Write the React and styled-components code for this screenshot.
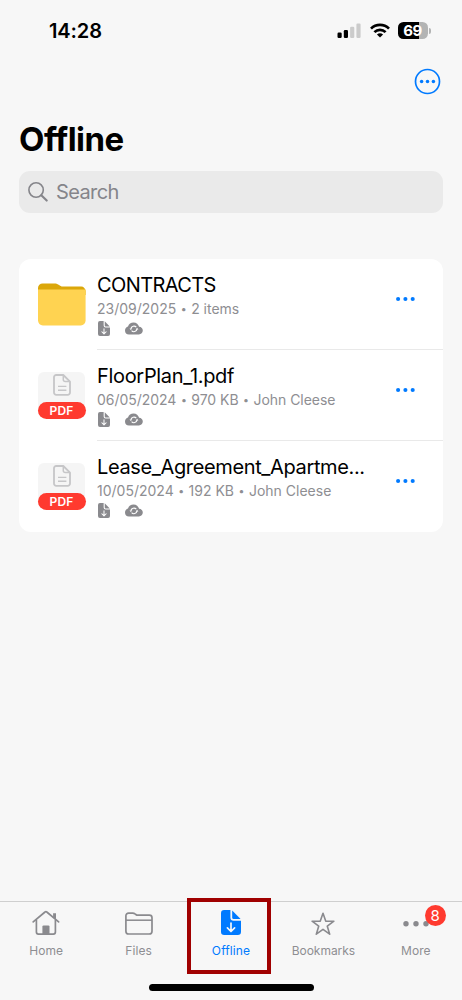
import React from "react";
import styled, { createGlobalStyle } from "styled-components";

//data
const files = [
  {
    name: "CONTRACTS",
    info: ["23/09/2025", "2 items"],
    type: "folder",
    spacing: -0.6,
    infoSpacing: 0,
  },
  {
    name: "FloorPlan_1.pdf",
    info: ["06/05/2024", "970 KB", "John Cleese"],
    type: "pdf",
    spacing: -0.32,
    infoSpacing: -0.03,
  },
  {
    name: "Lease_Agreement_Apartme...",
    info: ["10/05/2024", "192 KB", "John Cleese"],
    type: "pdf",
    spacing: -0.37,
    infoSpacing: 0,
  },
];

//icons
const SignalIcon = () => (
  <svg width="24" height="16" viewBox="0 0 24 16">
    <rect x="0.5" y="9.5" width="4.2" height="5.5" rx="1.2" fill="#000" />
    <rect x="6.8" y="7" width="4.2" height="8" rx="1.2" fill="#000" />
    <rect x="13.1" y="3.8" width="4.2" height="11.2" rx="1.2" fill="#cbcbcb" />
    <rect x="19.4" y="0.6" width="4.2" height="14.4" rx="1.2" fill="#cbcbcb" />
  </svg>
);

const WifiIcon = () => (
  <svg width="20" height="15" viewBox="0 0 20 15">
    <g fill="none" stroke="#000" strokeWidth="2.7">
      <path d="M1 5.6a12.9 12.9 0 0 1 18 0" />
      <path d="M4.4 9.1a8 8 0 0 1 11.2 0" />
    </g>
    <path d="M6.9 11.6a4.5 4.5 0 0 1 6.2 0L10 14.6z" fill="#000" />
  </svg>
);

const MoreCircleIcon = () => (
  <svg width="27" height="27" viewBox="0 0 27 27">
    <circle cx="13.5" cy="13.5" r="12" fill="none" stroke="#007aff" strokeWidth="1.7" />
    <g fill="#007aff">
      <circle cx="7.6" cy="13.5" r="1.75" />
      <circle cx="13.5" cy="13.5" r="1.75" />
      <circle cx="19.4" cy="13.5" r="1.75" />
    </g>
  </svg>
);

const SearchIcon = () => (
  <svg width="20" height="20" viewBox="0 0 20 20" fill="none" stroke="#85858a">
    <circle cx="8.1" cy="8" r="7.2" strokeWidth="1.6" />
    <path d="M13.3 13.2l5.4 5.4" strokeWidth="2.1" strokeLinecap="round" />
  </svg>
);

const FolderIcon = () => (
  <svg width="48" height="43" viewBox="0 0 48 43">
    <path
      d="M0 12V5a4.6 4.6 0 0 1 4.6-4.6h11.6c2 0 3 .4 4.4 1.4l1.6 1c1 .6 1.8.8 3 .8h18a4.4 4.4 0 0 1 4.4 4.4V12z"
      fill="#dba70a"
    />
    <path d="M0 6.4h47.6v31.2a4.8 4.8 0 0 1-4.8 4.8h-38a4.8 4.8 0 0 1-4.8-4.8z" fill="#ffd351" />
  </svg>
);

const PageIcon = () => (
  <svg width="18" height="22" viewBox="0 0 18 22" fill="none" stroke="#c6c6c8">
    <path
      d="M10.3 1H3.2A2.2 2.2 0 0 0 1 3.2v15.4a2.2 2.2 0 0 0 2.2 2.2h11.6a2.2 2.2 0 0 0 2.2-2.2V7.6z"
      strokeWidth="1.8"
      strokeLinejoin="round"
    />
    <path d="M10.3 1v4.8a1.8 1.8 0 0 0 1.8 1.8H17" strokeWidth="1.5" />
    <path d="M5 12.4h8.4M5 16.2h8.4" strokeWidth="1.4" />
  </svg>
);

const DownloadPageIcon = ({ width, height, color, bg }) => (
  <svg width={width} height={height} viewBox="0 0 20 25">
    <path
      d="M3.2 0H9.4v7.6a3.2 3.2 0 0 0 3.2 3.2H20v11a3.2 3.2 0 0 1-3.2 3.2H3.2A3.2 3.2 0 0 1 0 21.8V3.2A3.2 3.2 0 0 1 3.2 0z"
      fill={color}
    />
    <path d="M11.2.4l8.4 8.7h-7a1.4 1.4 0 0 1-1.4-1.4z" fill={color} />
    <path
      d="M10 13v8.2M6.4 17.9l3.6 3.6 3.6-3.6"
      fill="none"
      stroke={bg}
      strokeWidth="1.7"
      strokeLinecap="round"
      strokeLinejoin="round"
    />
  </svg>
);

const CloudSyncIcon = () => (
  <svg width="18" height="13" viewBox="0 0 18 13">
    <path
      d="M4.2 12.4A4.1 4.1 0 0 1 0 8.4c0-2 1.3-3.4 3-3.9C3.7 1.9 5.9.4 8.5.4c2.9 0 5 1.9 5.6 4.4 2.2.1 3.7 1.7 3.7 3.8 0 2.2-1.7 3.8-3.9 3.8z"
      fill="#8a8a8e"
    />
    <g fill="none" stroke="#fff" strokeWidth="1.1">
      <path d="M5.9 6.7a3.1 3.1 0 0 1 5.4-1.5" />
      <path d="M12 7.1a3.1 3.1 0 0 1-5.4 1.5" />
    </g>
    <path d="M4.5 6.4h2.7L5.8 8zM13.4 7.4h-2.7l1.4-1.6z" fill="#fff" />
  </svg>
);

const DotsIcon = () => (
  <svg width="20" height="6" viewBox="0 0 20 6" fill="#007aff">
    <circle cx="2.1" cy="3" r="2.05" />
    <circle cx="9.4" cy="3" r="2.05" />
    <circle cx="16.7" cy="3" r="2.05" />
  </svg>
);

const HomeIcon = () => (
  <svg width="28" height="25" viewBox="0 0 28 25" fill="none" stroke="#8a8a8e">
    <path
      d="M1.2 11.9L13 2a1.3 1.3 0 0 1 1.8 0l11.8 9.9"
      strokeWidth="1.7"
      strokeLinecap="round"
    />
    <path
      d="M4.4 9.8v12.3a2 2 0 0 0 2 2h15a2 2 0 0 0 2-2V9.8"
      strokeWidth="1.7"
    />
    <path d="M21.1 3.3h2.9v6.2l-2.9-2.4z" fill="#8a8a8e" stroke="none" />
    <path d="M10.4 24v-7.4a1.2 1.2 0 0 1 1.2-1.2h4.7a1.2 1.2 0 0 1 1.2 1.2V24z" fill="#8a8a8e" stroke="none" />
  </svg>
);

const FilesIcon = () => (
  <svg width="28" height="25" viewBox="0 0 28 25" fill="none" stroke="#8a8a8e" strokeWidth="1.7">
    <path d="M.9 21.2V5.8a2.7 2.7 0 0 1 2.7-2.7h4.1c1 0 1.6.2 2.3.8l.8.6c.6.5 1.2.7 2.2.7h11.4a2.6 2.6 0 0 1 2.6 2.6v13.4a2.8 2.8 0 0 1-2.8 2.8H3.7a2.8 2.8 0 0 1-2.8-2.8z" />
    <path d="M1 10.2h26" strokeWidth="1.5" />
  </svg>
);

const StarIcon = () => (
  <svg width="26" height="25" viewBox="0 0 26 25" fill="none" stroke="#8a8a8e">
    <path
      d="M13 3.2l2.7 7.9 8.2.1-6.6 5 2.4 8-6.7-4.9-6.7 4.9 2.4-8-6.6-5 8.2-.1z"
      strokeWidth="1.6"
      strokeLinejoin="round"
    />
  </svg>
);

const MoreIcon = () => (
  <svg width="28" height="25" viewBox="0 0 28 25" fill="#8a8a8e">
    <circle cx="4" cy="13.7" r="2.7" />
    <circle cx="14" cy="13.7" r="2.7" />
    <circle cx="24" cy="13.7" r="2.7" />
  </svg>
);

const tabs = [
  { label: "Home", icon: <HomeIcon />, spacing: 0.08 },
  { label: "Files", icon: <FilesIcon />, spacing: 0.12 },
  {
    label: "Offline",
    icon: <DownloadPageIcon width="20" height="25" color="#007aff" bg="#f7f7f7" />,
    active: true,
    spacing: 0.12,
  },
  { label: "Bookmarks", icon: <StarIcon />, spacing: -0.02 },
  { label: "More", icon: <MoreIcon />, badge: 8, spacing: 0.05 },
];

const App = () => {
  return (
    <>
      <GlobalStyle />
      <StyledScreen>
        <StyledStatusBar>
          <StyledTime>14:28</StyledTime>
          <StyledStatusIcons>
            <SignalIcon />
            <WifiIcon />
            <Battery level={69} />
          </StyledStatusIcons>
        </StyledStatusBar>
        <StyledToolbar>
          <StyledIconButton aria-label="Options">
            <MoreCircleIcon />
          </StyledIconButton>
        </StyledToolbar>
        <StyledTitle>Offline</StyledTitle>
        <StyledSearch>
          <SearchIcon />
          <span>Search</span>
        </StyledSearch>
        <StyledCard>
          {files.map((file) => (
            <FileRow file={file} key={file.name} />
          ))}
        </StyledCard>
        <StyledTabBar>
          {tabs.map((tab) => (
            <StyledTab key={tab.label} $active={tab.active} $spacing={tab.spacing}>
              {tab.icon}
              <span>{tab.label}</span>
              {tab.badge && <StyledBadge>{tab.badge}</StyledBadge>}
              {tab.active && <StyledHighlight />}
            </StyledTab>
          ))}
        </StyledTabBar>
        <StyledHomeIndicator />
      </StyledScreen>
    </>
  );
};

//Battery Component
const Battery = ({ level }) => {
  return (
    <StyledBattery>
      <StyledBatteryBody $level={level}>{level}</StyledBatteryBody>
      <StyledBatteryTip />
    </StyledBattery>
  );
};

//File row Component
const FileRow = ({ file }) => {
  return (
    <StyledRow>
      <StyledThumb>
        {file.type === "folder" ? (
          <FolderIcon />
        ) : (
          <StyledPdf>
            <PageIcon />
            <StyledPdfLabel>PDF</StyledPdfLabel>
          </StyledPdf>
        )}
      </StyledThumb>
      <StyledRowBody>
        <StyledDetails>
          <StyledName $spacing={file.spacing}>{file.name}</StyledName>
          <StyledInfo $spacing={file.infoSpacing}>
            {file.info.map((part, i) => (
              <React.Fragment key={part}>
                {i > 0 && <StyledBullet>•</StyledBullet>}
                {part}
              </React.Fragment>
            ))}
          </StyledInfo>
          <StyledFlags>
            <DownloadPageIcon width="12" height="15" color="#8a8a8e" bg="#fff" />
            <CloudSyncIcon />
          </StyledFlags>
        </StyledDetails>
        <StyledRowMenu aria-label="More actions">
          <DotsIcon />
        </StyledRowMenu>
      </StyledRowBody>
    </StyledRow>
  );
};

//styling
const GlobalStyle = createGlobalStyle`
  * {
    margin: 0;
    padding: 0;
    box-sizing: border-box;
  }
  body {
    background: #f7f7f7;
    font-family: "Inter", "Liberation Sans", sans-serif;
  }
  svg {
    display: block;
    flex-shrink: 0;
  }
  button {
    background: none;
    border: none;
  }
`;
const StyledScreen = styled.div`
  width: 462px;
  height: 1000px;
  display: flex;
  flex-direction: column;
  overflow: hidden;
  background: #f7f7f7;
`;
const StyledStatusBar = styled.div`
  height: 61px;
  padding: 0 31px 0 49px;
  display: flex;
  align-items: center;
  justify-content: space-between;
`;
const StyledTime = styled.div`
  font-size: 20px;
  font-weight: 600;
  letter-spacing: -0.1px;
`;
const StyledStatusIcons = styled.div`
  display: flex;
  align-items: center;
  gap: 8.5px;
`;
const StyledBattery = styled.div`
  display: flex;
  align-items: center;
  gap: 1px;
`;
const StyledBatteryBody = styled.div`
  width: 30px;
  height: 17px;
  padding-right: 1px;
  border-radius: 5.5px;
  background: linear-gradient(
    to right,
    #000 ${({ $level }) => $level}%,
    #b3b4b4 ${({ $level }) => $level}%
  );
  color: white;
  font-size: 15px;
  font-weight: 700;
  line-height: 17px;
  letter-spacing: -0.4px;
  text-align: center;
`;
const StyledBatteryTip = styled.div`
  width: 2px;
  height: 6px;
  border-radius: 0 2px 2px 0;
  background: #b3b4b4;
`;
const StyledToolbar = styled.div`
  height: 41px;
  padding-right: 21px;
  display: flex;
  align-items: center;
  justify-content: flex-end;
`;
const StyledIconButton = styled.button`
  display: flex;
`;
const StyledTitle = styled.h1`
  height: 69px;
  padding: 17px 0 0 19px;
  font-size: 33px;
  font-weight: 700;
  line-height: 40px;
  letter-spacing: -0.55px;
`;
const StyledSearch = styled.div`
  height: 42px;
  margin: 0 19px;
  padding: 0 9px;
  display: flex;
  align-items: center;
  gap: 8px;
  border-radius: 11px;
  background: #eaeaea;
  color: #85858a;
  font-size: 20px;
  letter-spacing: -0.6px;
`;
const StyledCard = styled.div`
  margin: 46px 19px 0;
  border-radius: 12px;
  background: white;
`;
const StyledRow = styled.div`
  height: 91px;
  padding-left: 19px;
  display: flex;
`;
const StyledThumb = styled.div`
  width: 59px;
  display: flex;
  align-items: center;
`;
const StyledPdf = styled.div`
  width: 47px;
  height: 47px;
  padding-top: 2px;
  display: flex;
  flex-direction: column;
  align-items: center;
  justify-content: space-between;
  border-radius: 6px 6px 9px 9px;
  background: #f5f5f5;
`;
const StyledPdfLabel = styled.div`
  width: 48px;
  height: 17px;
  border-radius: 9px;
  background: #ff3a2f;
  color: white;
  font-size: 12px;
  font-weight: 600;
  line-height: 17px;
  letter-spacing: 0.1px;
  text-align: center;
`;
const StyledRowBody = styled.div`
  flex: 1;
  display: flex;
  justify-content: space-between;
  ${StyledRow}:not(:last-child) & {
    border-bottom: 1px solid #e9e9e9;
  }
`;
const StyledDetails = styled.div`
  padding-top: 14px;
`;
const StyledName = styled.div`
  font-size: 20px;
  line-height: 25px;
  letter-spacing: ${({ $spacing }) => $spacing}px;
  white-space: nowrap;
`;
const StyledInfo = styled.div`
  margin-top: 1px;
  color: #8e8e92;
  font-size: 14px;
  line-height: 20px;
  letter-spacing: ${({ $spacing }) => $spacing}px;
  white-space: nowrap;
`;
const StyledBullet = styled.span`
  margin: 0 4.5px;
  font-size: 10.5px;
  line-height: 1;
  vertical-align: 1px;
`;
const StyledFlags = styled.div`
  height: 15px;
  margin-top: 2px;
  padding-left: 1px;
  display: flex;
  align-items: center;
  gap: 14.5px;
`;
const StyledRowMenu = styled.button`
  height: 79px;
  padding-right: 27px;
  display: flex;
  align-items: center;
`;
const StyledTabBar = styled.div`
  height: 83px;
  margin-top: auto;
  display: flex;
  border-top: 1px solid #cfcfcf;
`;
const StyledTab = styled.div`
  position: relative;
  flex: 1;
  padding-top: 8px;
  display: flex;
  flex-direction: column;
  align-items: center;
  gap: 8px;
  color: ${({ $active }) => ($active ? "#007aff" : "#8e8e92")};
  font-size: 12px;
  line-height: 16px;
  letter-spacing: ${({ $spacing }) => $spacing}px;
`;
const StyledBadge = styled.div`
  position: absolute;
  top: 3px;
  left: 55px;
  width: 21px;
  height: 21px;
  border-radius: 50%;
  background: #ff3a2f;
  color: white;
  font-size: 15px;
  line-height: 21px;
  letter-spacing: 0;
  text-align: center;
`;
const StyledHighlight = styled.div`
  position: absolute;
  top: -4px;
  left: 2px;
  width: 84px;
  height: 76px;
  border: 4px solid #a00000;
`;
const StyledHomeIndicator = styled.div`
  width: 165px;
  height: 6.5px;
  margin: 0 auto 9.5px;
  border-radius: 4px;
  background: black;
`;

export default App;
